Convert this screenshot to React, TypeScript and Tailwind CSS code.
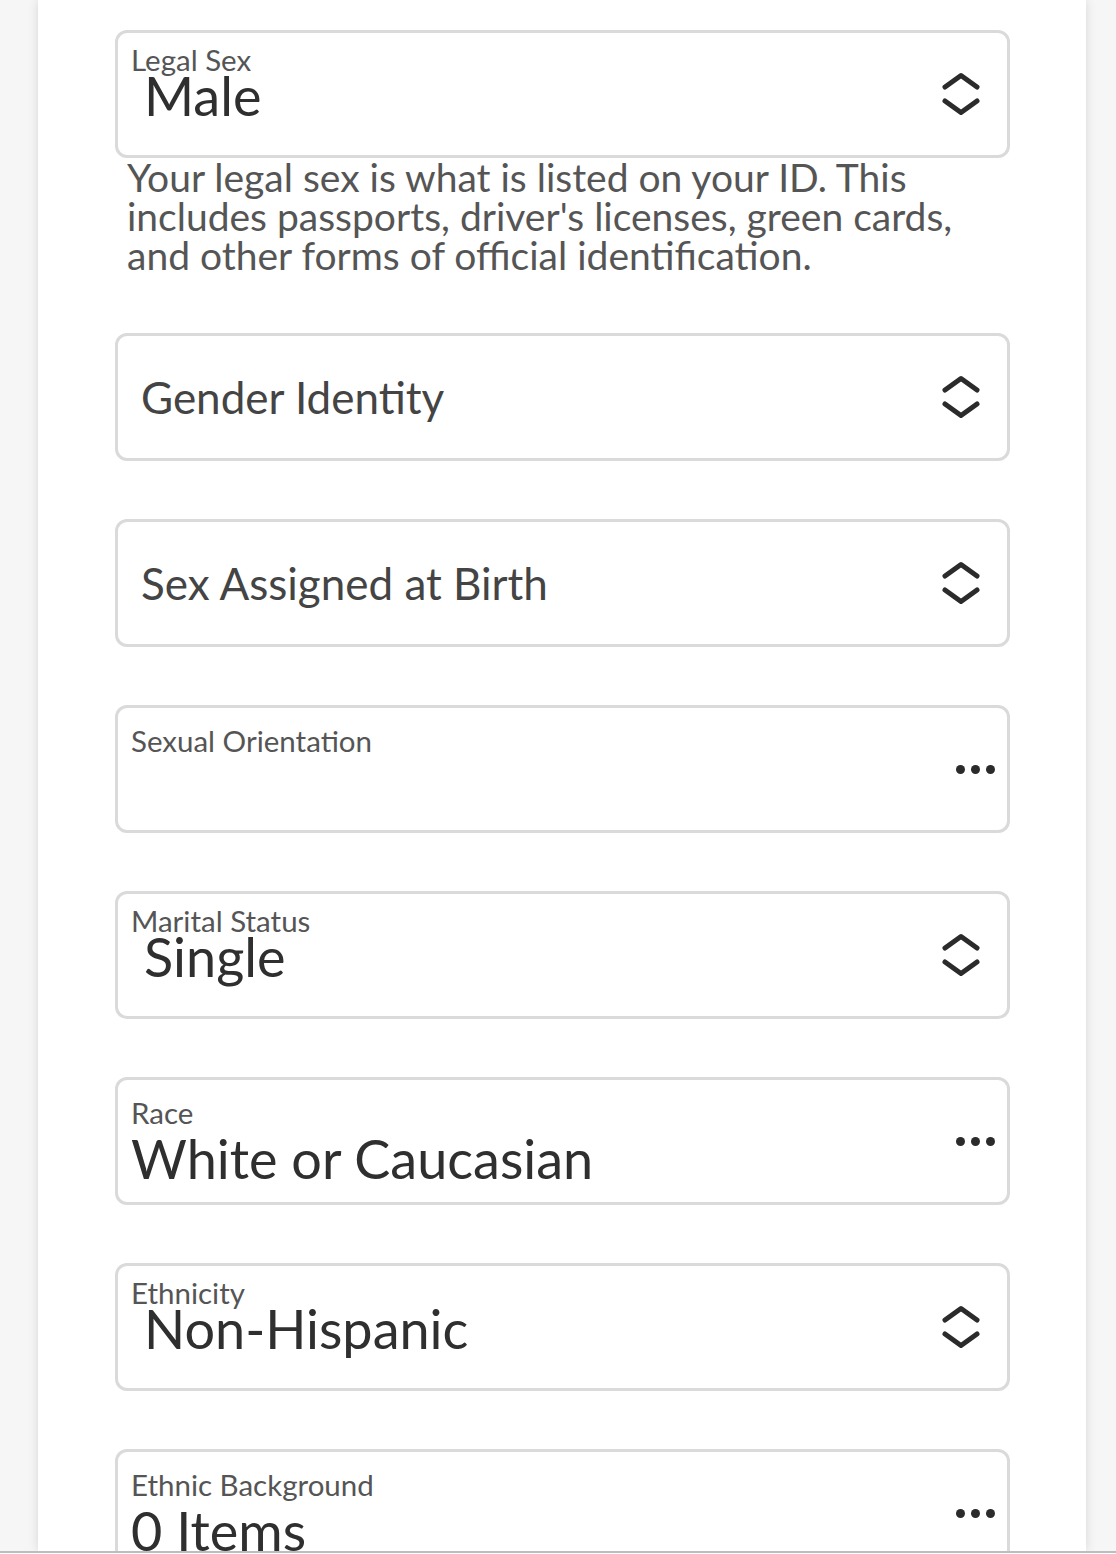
import React from 'react';

const font = { fontFamily: 'Lato, "Liberation Sans", sans-serif' };

const Chevrons = () => (
  <svg width="40" height="48" viewBox="0 0 40 48" fill="none" className="shrink-0 self-center">
    <path d="M4 17 L20 5.5 L36 17" stroke="#2b2b2b" strokeWidth="5" strokeLinecap="round" strokeLinejoin="round" />
    <path d="M4 31 L20 42.5 L36 31" stroke="#2b2b2b" strokeWidth="5" strokeLinecap="round" strokeLinejoin="round" />
  </svg>
);

const Dots = () => (
  <div className="flex items-center gap-[6px] shrink-0 self-center">
    <span className="block w-[9px] h-[9px] rounded-full bg-[#2b2b2b]" />
    <span className="block w-[9px] h-[9px] rounded-full bg-[#2b2b2b]" />
    <span className="block w-[9px] h-[9px] rounded-full bg-[#2b2b2b]" />
  </div>
);

interface FieldProps {
  label: string;
  value?: string;
}

const box = 'shrink-0 h-[128px] border-[3px] border-[#dadada] rounded-[12px] flex';

// picker with a floating label and an up/down chevron
const SelectField: React.FC<FieldProps> = ({ label, value }) => {
  if (!value) {
    return (
      <div className={`${box} items-center pl-[23px] pr-[26px]`}>
        <span className="flex-1 text-[44px] text-[#444444] leading-none">{label}</span>
        <Chevrons />
      </div>
    );
  }
  return (
    <div className={`${box} pl-[13px] pr-[26px]`}>
      <div className="flex-1 flex flex-col pt-[12px]">
        <span className="text-[29.5px] text-[#555555] leading-[30px]">{label}</span>
        <span className="text-[54px] text-[#2f2f2f] leading-[44px] -mt-[1px] pl-[13px]">{value}</span>
      </div>
      <Chevrons />
    </div>
  );
};

// multi-choice list field with the ellipsis button
const ListField: React.FC<FieldProps> = ({ label, value }) => (
  <div className={`${box} pl-[13px] pr-[12px]`}>
    <div className="flex-1 flex flex-col pt-[18px]">
      <span className="text-[29.5px] text-[#555555] leading-[30px]">{label}</span>
      {value && <span className="text-[54px] text-[#2f2f2f] leading-[56px] mt-[3px]">{value}</span>}
    </div>
    <Dots />
  </div>
);

export default function App() {
  return (
    <div style={font} className="h-[1554px] overflow-hidden bg-[#f6f6f6] flex flex-col">
      <div className="flex-1 overflow-hidden pl-[38px] pr-[30px]">
        <div className="h-full bg-white shadow-[0_0_10px_rgba(0,0,0,0.13)] pl-[77px] pr-[76px] pt-[30px] flex flex-col gap-[58px]">
          <div className="shrink-0 flex flex-col">
            <SelectField label="Legal Sex" value="Male" />
            <p className="pl-[12px] max-w-[872px] text-[39px] leading-[39px] text-[#555555]">
              Your legal sex is what is listed on your ID. This includes passports, driver's licenses, green cards, and other forms of official identification.
            </p>
          </div>
          <SelectField label="Gender Identity" />
          <SelectField label="Sex Assigned at Birth" />
          <ListField label="Sexual Orientation" />
          <SelectField label="Marital Status" value="Single" />
          <ListField label="Race" value="White or Caucasian" />
          <SelectField label="Ethnicity" value="Non-Hispanic" />
          <ListField label="Ethnic Background" value="0 Items" />
        </div>
      </div>
      <div className="h-[2px] bg-[#bdbdbd] shrink-0" />
      <div className="h-[1px] bg-white shrink-0" />
    </div>
  );
}
